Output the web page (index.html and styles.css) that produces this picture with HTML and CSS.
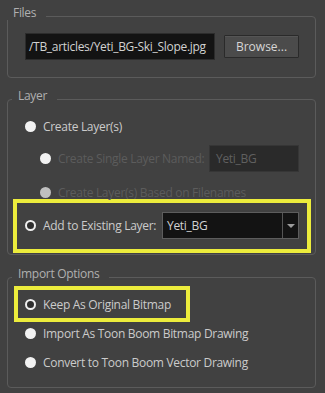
FILE: index.html
```html
<!DOCTYPE html>
<html lang="en">
<head>
    <meta charset="UTF-8">
    <meta name="viewport" content="width=device-width, initial-scale=1.0">
    <title>Import Images</title>
    <link rel="stylesheet" href="styles.css">
</head>
<body>
    <div class="dialog">
        <section class="group group--files">
            <div class="group__title">Files</div>
            <div class="file-row">
                <div class="path-field">/TB_articles/Yeti_BG-Ski_Slope.jpg</div>
                <button class="btn">Browse...</button>
            </div>
        </section>

        <section class="group group--layer">
            <div class="group__title">Layer</div>
            <div class="opt opt--first"><span class="radio"></span>Create Layer(s)</div>
            <div class="opt opt--sub opt--named is-off">
                <span class="radio"></span>Create Single Layer Named:
                <span class="name-field">Yeti_BG</span>
            </div>
            <div class="opt opt--sub opt--files is-off"><span class="radio radio--dim"></span>Create Layer(s) Based on Filenames</div>
            <div class="mark mark--layer">
                <div class="opt opt--existing">
                    <span class="radio radio--on"></span>Add to Existing Layer:
                    <div class="combo">
                        <span class="combo__value">Yeti_BG</span>
                        <span class="combo__btn"><span class="combo__arrow"></span></span>
                    </div>
                </div>
            </div>
        </section>

        <section class="group group--import">
            <div class="group__title">Import Options</div>
            <div class="mark mark--import">
                <div class="opt opt--keep"><span class="radio radio--on"></span>Keep As Original Bitmap</div>
            </div>
            <div class="opt opt--bitmap"><span class="radio"></span>Import As Toon Boom Bitmap Drawing</div>
            <div class="opt opt--vector"><span class="radio"></span>Convert to Toon Boom Vector Drawing</div>
        </section>
    </div>
</body>
</html>
```

FILE: styles.css
```css
* {
    margin: 0;
    padding: 0;
    box-sizing: border-box;
}
body {
    width: 325px;
    height: 393px;
    overflow: hidden;
    background-color: #414141;
    font-family: "Open Sans", "Noto Sans", sans-serif;
    font-size: 12px;
    letter-spacing: -0.3px;
    color: #cbcbcb;
}
.dialog {
    padding-top: 16px;
}

/* 그룹 박스 */
.group {
    width: 309px;
    margin-left: 7px;
    border: 1px solid #5b5b5b;
    border-radius: 4px;
}
.group__title {
    width: fit-content;
    height: 14px;
    line-height: 14px;
    margin: -11px 0 0 -1px;
    padding: 0 10px 0 6px;
    background-color: #414141;
    color: #b0b0b0;
}
.group--layer {
    margin-top: 21px;
    padding: 0 4px 1px 5px;
}
.group--import {
    margin-top: 22px;
    padding: 0 4px 17px 5px;
}

/* Files */
.file-row {
    display: flex;
    align-items: center;
    margin-top: 13px;
    padding: 0 16px 17px 17px;
}
.path-field {
    width: 190px;
    height: 27px;
    line-height: 25px;
    padding-left: 3px;
    border: 1px solid #2c2c2c;
    background-color: #131313;
    color: #d2d2d2;
    white-space: nowrap;
    overflow: hidden;
}
.btn {
    width: 75px;
    height: 23px;
    margin-left: 9px;
    border: 1px solid #2a2a2a;
    border-radius: 1px;
    background-color: #4b4b4b;
    box-shadow: inset 0 1px 0 #555;
    font: inherit;
    color: #d6d6d6;
}

/* 라디오 줄 */
.opt {
    display: flex;
    align-items: center;
    height: 16px;
    padding-left: 12px;
    white-space: nowrap;
}
.opt--first {
    margin-top: 15px;
}
.opt--sub {
    padding-left: 27px;
}
.opt--named {
    height: 27px;
    margin-top: 11px;
    padding-right: 12px;
}
.opt--files {
    height: 14px;
    margin-top: 13px;
}
.is-off {
    color: #5c5c5c;
}
.radio {
    flex: none;
    width: 11px;
    height: 11px;
    margin-right: 7px;
    border-radius: 50%;
    background-color: #f2f2f2;
}
.radio--dim {
    background-color: #bfbfbf;
}
.radio--on {
    border: 2px solid #efefef;
    background-color: #2e2e2e;
}
.name-field {
    width: 90px;
    height: 27px;
    line-height: 25px;
    margin-left: auto;
    padding-left: 6px;
    border: 1px solid #363636;
    background-color: #2a2a2a;
    color: #606060;
}

/* 노란 강조 박스 */
.mark {
    border: 4px solid #ecec3c;
}
.mark--layer {
    padding: 9px 8px 10px 8px;
}
.opt--existing {
    height: 27px;
    padding-left: 0;
}
.mark--import {
    width: 176px;
    margin: 5px 0 0 1px;
    padding-left: 7px;
}
.opt--keep {
    height: 28px;
    padding-left: 0;
}
.opt--bitmap {
    margin-top: 3px;
}
.opt--vector {
    margin-top: 13px;
}

/* 콤보 */
.combo {
    display: flex;
    width: 137px;
    height: 27px;
    margin-left: auto;
    border: 1px solid #5d5d5d;
    background-color: #131313;
}
.combo__value {
    flex: 1;
    line-height: 25px;
    padding-left: 4px;
    color: #d2d2d2;
}
.combo__btn {
    display: flex;
    align-items: center;
    justify-content: center;
    width: 16px;
    border-left: 1px solid #555;
}
.combo__arrow {
    width: 0;
    height: 0;
    border-left: 4px solid transparent;
    border-right: 4px solid transparent;
    border-top: 4px solid #9c9c9c;
}
```
